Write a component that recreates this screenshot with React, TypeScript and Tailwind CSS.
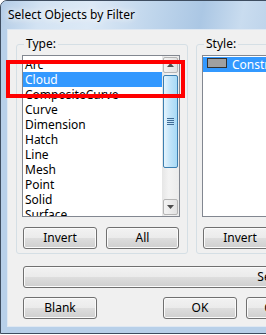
const typeItems = [
  "Arc",
  "Cloud",
  "CompositeCurve",
  "Curve",
  "Dimension",
  "Hatch",
  "Line",
  "Mesh",
  "Point",
  "Solid",
  "Surface",
];

function Button({ label, className }: { label: string; className: string }) {
  return (
    <div
      className={`flex h-[22px] shrink-0 items-center justify-center rounded-[3px] border border-[#707070] bg-[linear-gradient(#f2f2f2_0%,#ebebeb_48%,#dddddd_52%,#cfcfcf_100%)] shadow-[inset_0_0_0_1px_#fbfbfb] text-black ${className}`}
    >
      {label}
    </div>
  );
}

function ScrollArrow({ up }: { up: boolean }) {
  return (
    <div className="ml-[1px] flex h-[16px] w-[15px] items-center justify-center rounded-[2px] border border-[#b5b5b5] bg-[linear-gradient(90deg,#f4f4f4,#e2e2e2)]">
      <svg width="7" height="4" viewBox="0 0 7 4">
        {up ? <path d="M0 4 L3.5 0 L7 4 Z" fill="#4d4d4d" /> : <path d="M0 0 L3.5 4 L7 0 Z" fill="#4d4d4d" />}
      </svg>
    </div>
  );
}

function ScrollBar() {
  return (
    <div className="flex w-[17px] shrink-0 flex-col bg-[linear-gradient(90deg,#e6e6e6,#f3f3f3_40%,#ebebeb)] py-[1px]">
      <ScrollArrow up />
      <div className="flex-1 pt-[2px]">
        <div className="ml-[1px] flex h-[93px] w-[15px] items-center justify-center rounded-[2px] border border-[#3c7fb1] bg-[linear-gradient(90deg,#e5f4fd,#bfe3f9_50%,#a7d9f5)]">
          <div className="flex flex-col gap-[1px]">
            <div className="h-[1px] w-[7px] bg-[#3f6c96]" />
            <div className="h-[1px] w-[7px] bg-[#3f6c96]" />
            <div className="h-[1px] w-[7px] bg-[#3f6c96]" />
            <div className="h-[1px] w-[7px] bg-[#3f6c96]" />
          </div>
        </div>
      </div>
      <ScrollArrow up={false} />
    </div>
  );
}

export default function App() {
  return (
    <div className="relative h-[335px] w-[266px] overflow-hidden bg-white font-['Noto_Sans',sans-serif] text-[12px] text-black">
      <div className="flex h-[334px] w-[560px] flex-col rounded-t-[7px] border border-[#3e4d60] bg-[#b8d0e9]">
        <div className="flex h-[28px] shrink-0 items-center rounded-t-[6px] bg-[linear-gradient(100deg,#b3cce6_0px,#d3e3f3_40px,#dce9f6_90px,#c0d6ec_150px,#abc7e4_200px,#c9dcef_240px,#b2cbe6_300px)] pl-[7px]">
          <span className="[text-shadow:0_0_6px_#ffffff,0_0_10px_#ffffff]">Select Objects by Filter</span>
        </div>
        <div className="flex flex-1 px-[6px] pb-[6px]">
          <div className="flex flex-1 flex-col border border-[#dfe8f2] bg-[#f0f0f0] pl-[8px] pt-[6px]">
            <div className="flex gap-[8px]">
              <fieldset className="w-[172px] rounded-[3px] border border-[#d5dfe5] pb-[4px] pl-[5px] pr-[7px]">
                <legend className="ml-[2px] px-[2px] leading-[16px]">Type:</legend>
                <div className="mt-[3px] flex h-[162px] w-[158px] border border-[#828790] bg-white">
                  <div className="flex-1 overflow-hidden pt-[1px]">
                    {typeItems.map((item) => (
                      <div
                        key={item}
                        className={`h-[15px] whitespace-nowrap pl-[2px] leading-[15px] ${item === "Cloud" ? "bg-[#3399ff] text-white" : ""}`}
                      >
                        {item}
                      </div>
                    ))}
                  </div>
                  <ScrollBar />
                </div>
                <div className="mt-[10px] flex gap-[9px] pl-[1px]">
                  <Button label="Invert" className="w-[74px]" />
                  <Button label="All" className="w-[73px]" />
                </div>
              </fieldset>
              <fieldset className="w-[172px] rounded-[3px] border border-[#d5dfe5] pb-[4px] pl-[5px] pr-[7px]">
                <legend className="ml-[2px] px-[2px] leading-[16px]">Style:</legend>
                <div className="mt-[3px] h-[162px] w-[158px] border border-[#828790] bg-white pt-[1px]">
                  <div className="flex h-[15px] items-start bg-[#3399ff] pl-[4px] leading-[15px] text-white">
                    <div className="mt-[1px] h-[10px] w-[20px] shrink-0 border border-[#333333] bg-[#a0a0a0]" />
                    <span className="ml-[5px] whitespace-nowrap">Construction</span>
                  </div>
                </div>
                <div className="mt-[10px] flex gap-[9px] pl-[1px]">
                  <Button label="Invert" className="w-[74px]" />
                  <Button label="None" className="w-[73px]" />
                </div>
              </fieldset>
            </div>
            <div className="ml-[7px] mt-[12px] flex">
              <Button label="Select" className="w-[502px]" />
            </div>
            <div className="ml-[7px] mt-[9px] flex">
              <Button label="Blank" className="w-[74px]" />
              <Button label="OK" className="ml-[66px] w-[74px]" />
              <Button label="Cancel" className="ml-[9px] w-[74px]" />
            </div>
          </div>
        </div>
      </div>
      <div className="absolute left-[6px] top-[60px] h-[38px] w-[179px] border-4 border-[#ff0000]" />
    </div>
  );
}
